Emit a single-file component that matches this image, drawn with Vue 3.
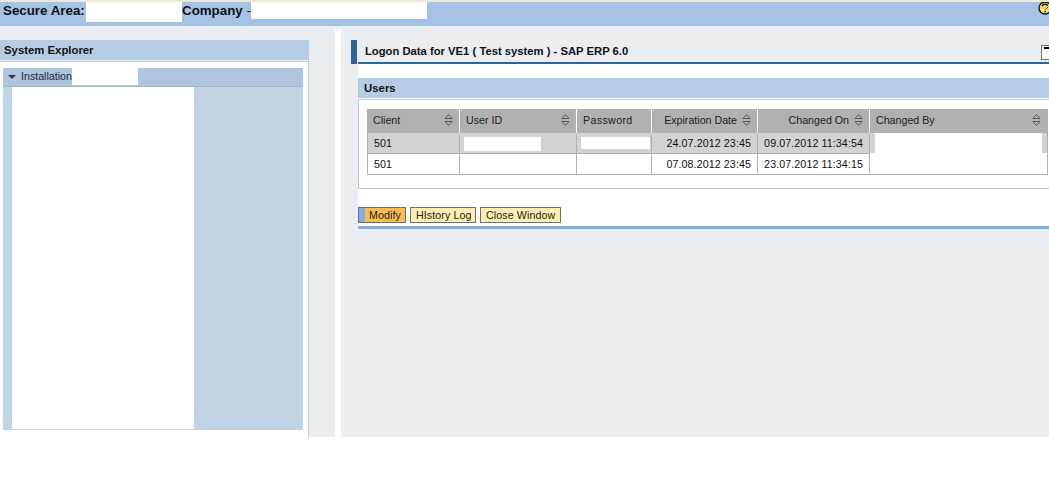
<script setup>
const columns = [
  { key: 'client', label: 'Client', sort: true },
  { key: 'user', label: 'User ID', sort: true },
  { key: 'password', label: 'Password', sort: false },
  { key: 'expiry', label: 'Expiration Date', sort: true, right: true },
  { key: 'changedOn', label: 'Changed On', sort: true, right: true },
  { key: 'changedBy', label: 'Changed By', sort: true },
]
const rows = [
  { client: '501', expiry: '24.07.2012 23:45', changedOn: '09.07.2012 11:34:54', selected: true },
  { client: '501', expiry: '07.08.2012 23:45', changedOn: '23.07.2012 11:34:15', selected: false },
]
const actions = [
  { label: 'HIstory Log', cls: 'history' },
  { label: 'Close Window', cls: 'close' },
]
</script>

<template>
  <div class="page">
    <header class="topbar">
      <span class="top-label area">Secure Area:</span>
      <span class="mask mask-area"></span>
      <span class="top-label company">Company <small>-</small></span>
      <span class="mask mask-company"></span>
      <svg class="help" viewBox="0 0 14 14" width="14" height="14">
        <circle cx="7" cy="7" r="6" fill="#ffe14d" stroke="#1a1a1a" stroke-width="1.4"/>
        <path d="M4.4 5.2 C4.4 2.6 9.6 2.6 9.6 5.2 C9.6 7 7 6.8 7 8.6" fill="none" stroke="#1a1a1a" stroke-width="1.5"/>
        <path d="M3.2 10.6 L11.2 4.2" stroke="#fff" stroke-width="1"/>
        <path d="M6.2 10.6 H8" stroke="#1a1a1a" stroke-width="1.4"/>
      </svg>
    </header>

    <main class="workspace">
      <aside class="explorer">
        <h2 class="panel-title">System Explorer</h2>
        <div class="explorer-body">
          <div class="tree">
            <div class="tree-head">
              <span class="tree-label"><i class="caret"></i><span class="tree-text">Installation</span></span>
              <span class="tree-mask"></span>
            </div>
            <div class="tree-content">
              <div class="tree-white"></div>
            </div>
          </div>
        </div>
      </aside>

      <div class="divider"></div>

      <section class="content">
        <div class="title-row">
          <span class="title-marker"></span>
          <div class="title-bar">
            <h1>Logon Data for VE1 ( Test system ) - SAP ERP 6.0</h1>
            <span class="minimize"></span>
          </div>
        </div>

        <div class="sheet">
          <h2 class="users-title">Users</h2>
          <div class="users-panel">
            <table class="users">
              <colgroup>
                <col class="c1" /><col class="c2" /><col class="c3" /><col class="c4" /><col class="c5" /><col class="c6" />
              </colgroup>
              <thead>
                <tr>
                  <th v-for="c in columns" :key="c.key" :class="c.key">
                    <div class="th-inner" :class="{ right: c.right }">
                      <span class="th-text">{{ c.label }}</span>
                      <svg v-if="c.sort" class="sort" viewBox="0 0 9 12" width="9" height="12">
                        <path d="M4.5 .5 L8 4.5 H1 Z" fill="none" stroke="#5a5a5a" stroke-width="1"/>
                        <path d="M4.5 11.5 L8 7.5 H1 Z" fill="none" stroke="#5a5a5a" stroke-width="1"/>
                      </svg>
                    </div>
                  </th>
                </tr>
              </thead>
              <tbody>
                <tr v-for="(r, i) in rows" :key="i" :class="{ selected: r.selected }">
                  <td class="client">{{ r.client }}</td>
                  <td class="user"><span v-if="r.selected" class="cell-mask mask-user"></span></td>
                  <td class="password"><span v-if="r.selected" class="cell-mask mask-pass"></span></td>
                  <td class="num expiry">{{ r.expiry }}</td>
                  <td class="num changed">{{ r.changedOn }}</td>
                  <td class="by"><span v-if="r.selected" class="by-mask"></span></td>
                </tr>
              </tbody>
            </table>
          </div>
          <div class="actions">
            <button class="btn primary"><i class="btn-stripe"></i>Modify</button>
            <button v-for="a in actions" :key="a.cls" class="btn" :class="a.cls">{{ a.label }}</button>
          </div>
        </div>
        <div class="rule"></div>
      </section>
    </main>
  </div>
</template>

<style>
html, body { margin: 0; background: #fff; }
</style>

<style scoped>
.page {
  width: 1049px;
  height: 480px;
  overflow: hidden;
  font-family: "Liberation Sans", Arial, sans-serif;
  font-size: 10.67px;
  color: #111;
  background: #fff;
  border-top: 2px solid #ece9d8;
  box-sizing: border-box;
}
.topbar {
  position: relative;
  height: 24px;
  background: #a5c1e4;
  display: flex;
  align-items: flex-start;
}
.top-label {
  font-size: 13.33px;
  font-weight: bold;
  line-height: 17px;
  white-space: nowrap;
  box-sizing: border-box;
}
.top-label small { font-size: 13.33px; font-weight: normal; }
.area { width: 86px; padding-left: 3px; }
.company { width: 69px; }
.mask { background: #fff; display: block; }
.mask-area { width: 96px; height: 20px; }
.mask-company { width: 176px; height: 17px; }
.help { position: absolute; right: -3px; top: -1px; }
.workspace {
  display: flex;
  height: 411px;
  background: #eaeef2;
}
.explorer {
  width: 309px;
  padding-top: 14px;
  box-sizing: border-box;
  display: flex;
  flex-direction: column;
}
.panel-title {
  margin: 0;
  height: 20px;
  line-height: 20px;
  padding-left: 4px;
  background: #b6cce4;
  font-size: 11.35px;
  font-weight: bold;
}
.explorer-body {
  flex: 1;
  margin-top: 1px;
  background: #fff;
  border-top: 1px solid #b6cce4;
  border-right: 1px solid #b6cce4;
  padding: 6px 5px 7px 3px;
}
.tree { height: 362px; display: flex; flex-direction: column; }
.tree-head {
  height: 19px;
  flex: none;
  box-sizing: border-box;
  background: #afc5dc;
  border-bottom: 1px solid #9fb6cf;
  display: flex;
}
.tree-label {
  width: 69px;
  display: flex;
  align-items: center;
  color: #1c2a3a;
  white-space: nowrap;
}
.tree-text { margin-top: -2px; }
.caret {
  width: 0;
  height: 0;
  margin: 0 5px 0 5px;
  border-left: 4px solid transparent;
  border-right: 4px solid transparent;
  border-top: 4px solid #2c3346;
}
.tree-mask { width: 66px; height: 17px; background: #fff; }
.tree-content {
  flex: 1;
  background: #c1d4e5;
  padding-left: 9px;
}
.tree-white {
  width: 182px;
  height: 100%;
  box-sizing: border-box;
  background: #fff;
  border-bottom: 1px solid #c1d4e5;
}
.divider {
  width: 6px;
  margin: 4px 0 0 26px;
  background: #fff;
}
.content { flex: 1; min-width: 0; padding-top: 14px; }
.title-row { display: flex; padding-left: 10px; }
.title-marker { width: 6px; height: 24px; background: #2f6595; margin-right: 1px; }
.title-bar {
  flex: 1;
  height: 24px;
  box-sizing: border-box;
  border-bottom: 2px solid #2f6595;
  display: flex;
  align-items: flex-start;
  justify-content: space-between;
}
.title-bar h1 {
  margin: 0 0 0 7px;
  font-size: 11.26px;
  font-weight: bold;
  line-height: 22px;
  white-space: nowrap;
}
.minimize {
  width: 8px;
  height: 15px;
  margin-top: 5px;
  box-sizing: border-box;
  border: 1px solid #707070;
  border-right: 0;
  background: #fff;
  position: relative;
}
.minimize::after {
  content: "";
  position: absolute;
  left: 2px;
  top: 1px;
  right: 0;
  height: 2px;
  background: #000;
}
.sheet {
  margin-left: 17px;
  height: 162px;
  box-sizing: border-box;
  padding-top: 14px;
  background: #fff;
}
.users-title {
  margin: 0;
  height: 20px;
  line-height: 20px;
  padding-left: 6px;
  background: #b6cce4;
  font-size: 11.4px;
  font-weight: bold;
}
.users-panel {
  margin-top: 1px;
  height: 90px;
  box-sizing: border-box;
  padding: 9px 0 0 8px;
  border-top: 1px solid #b6cce4;
  border-left: 1px solid #b6cce4;
  border-bottom: 1px solid #b6cce4;
}
.users {
  width: 681px;
  table-layout: fixed;
  border-collapse: separate;
  border-spacing: 0;
  font-size: 10.67px;
}
.c1 { width: 93px; }
.c2 { width: 117px; }
.c3 { width: 75px; }
.c4 { width: 106px; }
.c5 { width: 112px; }
.users th {
  height: 24px;
  padding: 0;
  box-sizing: border-box;
  background: #b0b0b0;
  border-right: 1px solid #fff;
  font-weight: normal;
  text-align: left;
}
.users th:first-child { border-left: 1px solid #b0b0b0; }
.users th:last-child { border-right: 1px solid #b0b0b0; }
.th-inner {
  display: flex;
  justify-content: space-between;
  align-items: center;
  padding: 0 6px 0 6px;
  color: #222;
}
.client .th-inner { padding-left: 5px; }
.th-text { margin-top: -2px; }
.password .th-text { letter-spacing: .35px; }
.th-inner.right { justify-content: flex-end; gap: 5px; padding-right: 6px; }
.sort { margin-top: -2px; }
.users td {
  height: 21px;
  padding: 0 5px 0 6px;
  box-sizing: border-box;
  border-right: 1px solid #b0b0b0;
  border-bottom: 1px solid #b0b0b0;
  position: relative;
  color: #111;
  letter-spacing: .1px;
}
.users td:first-child { border-left: 1px solid #b0b0b0; }
.users tr.selected td { background: #d2d2d2; }
.users td.num { text-align: right; padding: 0 6px 0 0; white-space: nowrap; }
.users td.by { padding: 0 5px; }
.users tr.selected td.by { border-bottom-color: #fff; }
.cell-mask { display: block; background: #fff; }
.mask-user { width: 77px; height: 14px; margin: 1px 0 0 -2px; }
.mask-pass { width: 69px; height: 12px; margin: -1px 0 0 -2px; }
.by-mask {
  position: absolute;
  left: 5px;
  right: 5px;
  top: 0;
  bottom: -1px;
  background: #fff;
}
.actions {
  display: flex;
  gap: 4px;
  margin-top: 18px;
}
.btn {
  height: 16px;
  padding: 0 0 0 5px;
  margin: 0;
  box-sizing: border-box;
  border: 1px solid #6f6f6f;
  background: #fdeeb0;
  font: 10.67px/14px "Liberation Sans", Arial, sans-serif;
  letter-spacing: .1px;
  color: #222;
  white-space: nowrap;
  display: flex;
  align-items: center;
}
.history { width: 66px; }
.close { width: 81px; }
.btn.primary {
  width: 48px;
  padding: 0 0 0 10px;
  background: #fdbb4e;
  position: relative;
}
.btn-stripe {
  position: absolute;
  left: 0;
  top: 0;
  bottom: 0;
  width: 6px;
  background: #82ade0;
}
.rule {
  margin-left: 17px;
  height: 3px;
  background: #82ade0;
}
</style>
